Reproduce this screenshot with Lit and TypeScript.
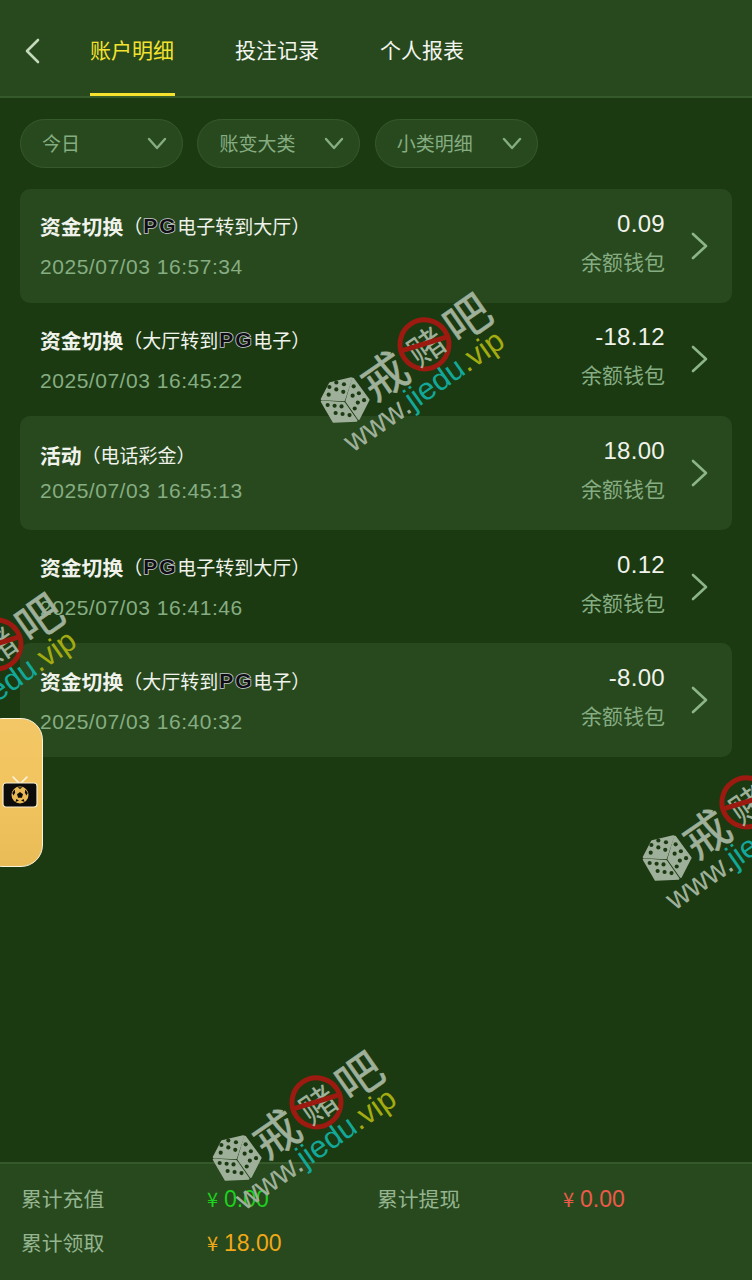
import { LitElement, html, css, svg } from "lit";
import { customElement } from "lit/decorators.js";

const rows = [
  { title: "资金切换", before: "（", pg: true, after: "电子转到大厅）", date: "2025/07/03 16:57:34", amount: "0.09" },
  { title: "资金切换", before: "（大厅转到", pg: true, after: "电子）", date: "2025/07/03 16:45:22", amount: "-18.12" },
  { title: "活动", before: "（电话彩金）", pg: false, after: "", date: "2025/07/03 16:45:13", amount: "18.00" },
  { title: "资金切换", before: "（", pg: true, after: "电子转到大厅）", date: "2025/07/03 16:41:46", amount: "0.12" },
  { title: "资金切换", before: "（大厅转到", pg: true, after: "电子）", date: "2025/07/03 16:40:32", amount: "-8.00" },
];

const marks = [
  { x: 345, y: 400 },
  { x: -83, y: 700 },
  { x: 667, y: 858 },
  { x: 237, y: 1158 },
];

const pips = [
  [50, 17], [30, 30], [50, 37], [70, 44], [28, 52], [72, 22],
  [100, 28], [115, 48], [130, 68], [97, 55], [112, 75], [103, 92],
  [25, 82], [45, 84], [65, 86], [48, 105], [68, 108], [88, 111],
];

const chevron = (cls: string, d: string, vb: string) =>
  html`<svg class=${cls} viewBox=${vb} fill="none" stroke="currentColor" stroke-linecap="round" stroke-linejoin="round"><path d=${d}></path></svg>`;

@customElement("wm-mark")
class WmMark extends LitElement {
  static styles = css`
    :host { display: block; width: 210px; transform: rotate(-35deg); transform-origin: 24px 24px; pointer-events: none; }
    .top { display: flex; align-items: center; height: 48px; }
    .dice { width: 52px; height: 48px; flex: none; margin: 0 -3px 0 -2px; transform: rotate(35deg); }
    .cn { font: 400 46px/48px "Noto Sans CJK SC", sans-serif; color: #9fb09a; -webkit-text-stroke: 0.6px #9fb09a; width: 46px; text-align: center; flex: none; }
    .no { position: relative; width: 54px; height: 54px; flex: none; margin: 0 0 0 1px; border: 5px solid #9c1a10; border-radius: 50%; box-sizing: border-box; display: flex; align-items: center; justify-content: center; font: 400 36px/1 "Noto Sans CJK SC", sans-serif; color: #9fb09a; }
    .no::after { content: ""; position: absolute; left: -1px; right: -1px; top: 19px; height: 5px; background: #9c1a10; transform: rotate(18deg); }
    .url { margin: -1px 0 0 0; font: 400 31px/30px "Liberation Sans", sans-serif; color: #9fb09a; white-space: nowrap; }
    .c { color: #12a89a; }
    .y { color: #a3ab10; }
  `;
  render() {
    return html`
      <div class="top">
        <svg class="dice" viewBox="0 0 150 135">
          <g fill="#9fb09a" stroke="#9fb09a" stroke-width="6" stroke-linejoin="round">
            <path d="M8 65 32 19 93 5 72 68Z"></path>
            <path d="M98 6 143 67 115 122 79 71Z"></path>
            <path d="M8 72 72 76 108 127 42 130Z"></path>
          </g>
          <g fill="#1b3a12">${pips.map((p) => svg`<circle cx=${p[0]} cy=${p[1]} r="6"></circle>`)}</g>
        </svg>
        <span class="cn">戒</span>
        <span class="no">赌</span>
        <span class="cn">吧</span>
      </div>
      <div class="url">www.<span class="c">jiedu</span><span class="y">.vip</span></div>
    `;
  }
}

@customElement("app-root")
class AppRoot extends LitElement {
  static styles = css`
    :host { display: block; position: relative; width: 752px; height: 1280px; overflow: hidden; background: #1b3a12; font-family: "Liberation Sans", "Noto Sans CJK SC", sans-serif; }
    .page { height: 100%; display: flex; flex-direction: column; }
    .head { height: 96px; flex: none; display: flex; background: #28491e; border-bottom: 2px solid #36592b; box-sizing: content-box; }
    .back { width: 16px; height: 26px; color: #c3d8bd; stroke-width: 2.6; margin: 38px 50px 0 24px; flex: none; }
    .tabs { display: flex; gap: 61px; }
    .tab { width: 84px; height: 96px; box-sizing: border-box; padding-top: 33px; font: 400 21px/32px "Noto Sans CJK SC", sans-serif; color: #f2f5ee; white-space: nowrap; }
    .tab.on { color: #f5e22f; border-bottom: 3px solid #f5e22f; width: 85px; margin-right: -1px; }
    .filters { display: flex; gap: 14.4px; padding: 21px 20px 0; flex: none; }
    .filter { width: 163px; height: 49px; box-sizing: border-box; border: 1.5px solid #36592b; border-radius: 25px; background: #28491e; display: flex; align-items: center; justify-content: space-between; padding: 0 15px 2px 21px; font: 400 19px/28px "Noto Sans CJK SC", sans-serif; color: #86ad82; }
    .filter svg { width: 20px; height: 14px; stroke-width: 2.4; margin-top: 2px; }
    .list { flex: 1; padding: 21px 20px 0; display: flex; flex-direction: column; }
    .row { height: 113.6px; flex: none; box-sizing: border-box; border-radius: 10px; display: flex; align-items: center; padding: 0 24px 0 20px; }
    .row.alt { background: #28491e; }
    .left { flex: 1; display: flex; flex-direction: column; gap: 10px; padding-bottom: 1px; }
    .left.up { padding-bottom: 5px; }
    .title { height: 28px; display: flex; align-items: center; white-space: nowrap; color: #f0f3ec; font: 400 19px/28px "Noto Sans CJK SC", sans-serif; }
    .title.tall { height: 38px; }
    .title b { font-size: 20.8px; font-weight: 700; }
    .before { margin-right: 1px; }
    .pg { font: 700 21px/28px "Liberation Sans", sans-serif; color: #0e0e14; -webkit-text-stroke: 1.6px #c9c9d2; paint-order: stroke fill; letter-spacing: 2px; width: 34px; flex: none; }
    .date { font: 400 21px/24px "Liberation Sans", sans-serif; color: #86ad82; white-space: nowrap; letter-spacing: 0.53px; }
    .right { display: flex; flex-direction: column; align-items: flex-end; gap: 9px; margin-top: -7px; }
    .amount { font: 400 24px/28px "Liberation Sans", sans-serif; color: #f0f3ec; letter-spacing: 0.3px; }
    .wallet { font: 400 21px/28px "Noto Sans CJK SC", sans-serif; color: #86ad82; white-space: nowrap; }
    .go { width: 18px; height: 28px; margin-left: 25px; stroke-width: 2.6; color: #8cb588; flex: none; }
    .foot { height: 118px; box-sizing: border-box; flex: none; background: #28491e; border-top: 2px solid #36592b; display: grid; grid-template-columns: 186px 170px 186px 1fr; grid-auto-rows: 44px; align-content: start; padding: 12px 0 0 21px; align-items: center; font: 400 20.8px/30px "Noto Sans CJK SC", sans-serif; }
    .lbl { color: #95b490; white-space: nowrap; }
    .val { font: 400 23px/30px "Liberation Sans", sans-serif; white-space: nowrap; position: relative; top: 1px; }
    .val i { display: inline-block; width: 17px; font: 400 20px/30px "Noto Sans CJK SC", sans-serif; }
    .g { color: #1ed01e; }
    .r { color: #ee5a4a; }
    .o { color: #f0a818; }
    wm-mark { position: absolute; }
    .float { position: absolute; left: -20px; top: 718px; width: 63px; height: 149px; box-sizing: border-box; border: 1.5px solid #f8f3dc; border-radius: 22px; background: linear-gradient(180deg, #f3c766 0%, #f2c45e 50%, #e9bc58 100%); display: flex; align-items: center; justify-content: flex-end; padding-right: 4px; }
    .float svg { width: 36px; height: 36px; margin-top: 1px; }
  `;

  render() {
    return html`
      <div class="page">
        <div class="head">
          ${chevron("back", "M14 2 3 13l11 11", "0 0 16 26")}
          <div class="tabs">
            <div class="tab on">账户明细</div>
            <div class="tab">投注记录</div>
            <div class="tab">个人报表</div>
          </div>
        </div>
        <div class="filters">
          ${["今日", "账变大类", "小类明细"].map(
            (t) => html`<div class="filter"><span>${t}</span>${chevron("", "M2 2l8 9 8-9", "0 0 20 14")}</div>`
          )}
        </div>
        <div class="list">
          ${rows.map(
            (r, i) => html`
              <div class="row ${i % 2 === 0 ? "alt" : ""}">
                <div class="left ${r.pg ? "up" : ""}">
                  <div class="title ${r.pg ? "tall" : ""}">
                    <b>${r.title}</b><span class="before">${r.before}</span>${r.pg ? html`<span class="pg">PG</span>` : ""}<span>${r.after}</span>
                  </div>
                  <div class="date">${r.date}</div>
                </div>
                <div class="right">
                  <div class="amount">${r.amount}</div>
                  <div class="wallet">余额钱包</div>
                </div>
                ${chevron("go", "M3 2l13 12L3 26", "0 0 18 28")}
              </div>
            `
          )}
        </div>
        <div class="foot">
          <span class="lbl">累计充值</span><span class="val g"><i>¥</i>0.00</span>
          <span class="lbl">累计提现</span><span class="val r"><i>¥</i>0.00</span>
          <span class="lbl">累计领取</span><span class="val o"><i>¥</i>18.00</span>
        </div>
      </div>
      ${marks.map((m) => html`<wm-mark style="left:${m.x - 24}px;top:${m.y - 24}px"></wm-mark>`)}
      <div class="float">
        <svg viewBox="0 0 36 36">
          <path d="M11 2l6 6M25 2l-6 6" stroke="#fbf6e2" stroke-width="1.6" stroke-linecap="round"></path>
          <rect x="1" y="8" width="34" height="24" rx="3" fill="#0c0c0c" stroke="#f5ecd0" stroke-width="1.2"></rect>
          <circle cx="18" cy="20" r="8.5" fill="#e9b955"></circle>
          <path d="M18 17l3 2.2-1.1 3.5h-3.8L15 19.2z" fill="#0c0c0c"></path>
          <path d="M15.5 12.3h5L18 14zM10.2 18l2.4-3.4.6 3-1.6 3zM25.8 18l-2.4-3.4-.6 3 1.6 3zM13.5 27l.8-3 2.7 1.6zM22.5 27l-.8-3-2.7 1.6z" fill="#0c0c0c"></path>
        </svg>
      </div>
    `;
  }
}
